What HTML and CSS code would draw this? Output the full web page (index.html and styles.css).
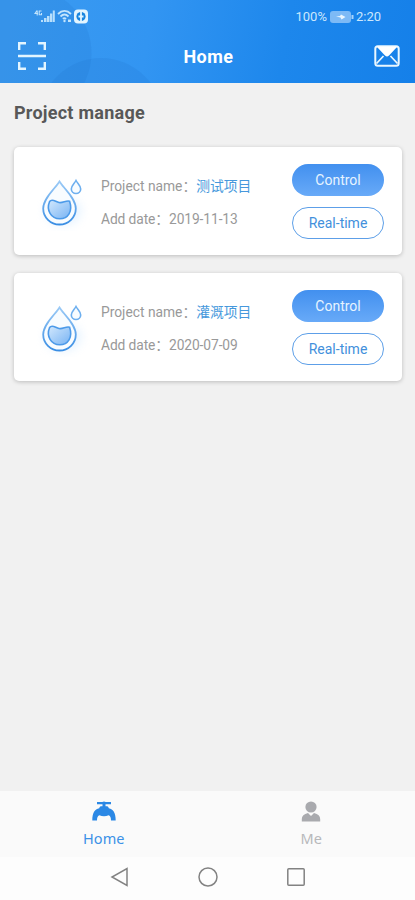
FILE: index.html
```html
<!DOCTYPE html>
<html lang="en">
<head>
<meta charset="utf-8">
<title>Home</title>
<link rel="stylesheet" href="styles.css">
</head>
<body>
<svg class="defs" width="0" height="0" aria-hidden="true">
  <defs>
    <linearGradient id="line" x1="0" y1="0" x2="0" y2="1"><stop offset="0" stop-color="#9bcaf6"/><stop offset="1" stop-color="#3a8ee4"/></linearGradient>
    <linearGradient id="water" x1="0" y1="0" x2="1" y2="1"><stop offset="0" stop-color="#d2e8fd"/><stop offset="1" stop-color="#78b3f3"/></linearGradient>
    <symbol id="drops" viewBox="0 0 56 60">
      <ellipse class="glow" cx="28" cy="40" rx="18" ry="14"/>
      <path d="M24.500 10.500C21 16.500 8.200 27 8.200 37.500A16.300 16 0 0 0 40.800 37.500C40.800 27 28 16.500 24.500 10.500Z" fill="#f8fcff" stroke="url(#line)" stroke-width="1.800"/>
      <path d="M14.600 30.500C17 27 20.500 30.800 24 31.500C28 32.300 31 29 34.600 30.200C38 40.500 33 47.700 24.800 47.700C16 47.700 11 39 14.600 30.500Z" fill="url(#water)" stroke="#4c9ae9" stroke-width="1.600"/>
      <path d="M41 9.500C39.500 12.500 36.300 14.500 36.300 18A4.700 4.500 0 0 0 45.700 18C45.700 14.500 42.500 12.500 41 9.500Z" fill="#f8fcff" stroke="#6dafef" stroke-width="1.600"/>
    </symbol>
  </defs>
</svg>
<div class="app">
  <header class="header">
    <svg class="header-art" width="415" height="83"><circle cx="26" cy="53" r="65.500"/><circle cx="101" cy="120" r="62"/></svg>
    <div class="status">
      <svg class="signals" width="56" height="16" viewBox="0 0 56 16">
        <path d="M3 2.500L1 5.500H4M3.200 2.500V7.500M7.500 3H5.200V6.800H7.500V5" fill="none" stroke="#c2e4fd" stroke-width="1.100"/>
        <path d="M7 12h2v2H7zM10 10h2.500v4H10zM13 8h2.500v6H13zM16 5.500h2.300V14H16zM18.800 2.500h2V14h-2z" fill="#b8dffc"/>
        <path d="M24 6C28 2 33 2 37 6M26.500 8.500C29 6 32 6 34.500 8.500M28.800 10.800Q30.500 9.500 32 11" fill="none" stroke="#c2e4fd" stroke-width="1.800"/>
        <circle cx="30.500" cy="13" r="1.200" fill="#c2e4fd"/><path d="M34 11.500h3V14h-3z" fill="#c2e4fd"/>
        <rect x="40" y="1.500" width="14" height="14" rx="4" fill="#e3f5ff"/>
        <circle cx="47" cy="8.500" r="4.600" fill="#1784df"/><path d="M47 4V13M44.500 8.500H49.500" stroke="#e3f5ff" stroke-width="1.800"/>
      </svg>
      <div class="status-right">
        <span class="pct">100%</span>
        <svg width="24" height="12" viewBox="0 0 24 12"><rect x="0" y="0" width="21" height="12" rx="3" fill="#7dbaf6"/><path d="M21.500 4h2v4h-2z" fill="#a8d4fa"/><path d="M6 5.500L10 5L11 3.500L15.500 6L11.500 8.500L10.500 6.500Z" fill="#e9f6ff"/></svg>
        <span class="clock">2:20</span>
      </div>
    </div>
    <div class="titlebar">
      <svg width="28" height="28" viewBox="0 0 28 28" fill="none" stroke="#e3f5ff" stroke-width="2.400"><path d="M1.200 8V1.200H8M20 1.200H26.800V8M1.200 20V26.800H8M20 26.800H26.800V20M0 14H28"/></svg>
      <h1>Home</h1>
      <svg width="26" height="22" viewBox="0 0 26 22"><rect x="1.300" y="1.300" width="23.400" height="19.400" rx="2.500" fill="none" stroke="#e9f7ff" stroke-width="2"/><path d="M2.500 1.500H23.500L15 10.500Q13 12.500 11 10.500Z" fill="#fff"/><path d="M2.500 18.500L9.500 11M23.500 18.500L16.500 11" fill="none" stroke="#e9f7ff" stroke-width="1.700"/></svg>
    </div>
  </header>
  <main>
    <h2>Project manage</h2>
    <section class="card">
      <svg class="drops" width="56" height="60"><use href="#drops"/></svg>
      <div class="info">
        <p><span class="name-label">Project name：</span><span class="name">测试项目</span></p>
        <p>Add date：2019-11-13</p>
      </div>
      <div class="actions"><button class="control">Control</button><button class="realtime">Real-time</button></div>
    </section>
    <section class="card">
      <svg class="drops" width="56" height="60"><use href="#drops"/></svg>
      <div class="info">
        <p><span class="name-label">Project name：</span><span class="name">灌溉项目</span></p>
        <p>Add date：2020-07-09</p>
      </div>
      <div class="actions"><button class="control">Control</button><button class="realtime">Real-time</button></div>
    </section>
  </main>
  <nav class="tabs">
    <div class="tab active">
      <svg width="24" height="20" viewBox="0 0 24 20" fill="#2b88e5"><path d="M5 1H10.300Q12 0 13.700 1H19V3.300H13.500V5.300H15.300Q16.500 6 16.800 7.300C21.300 8 23.700 12 23.700 19.500H19C19 16.800 18.500 15 16.700 14.200Q12 16.300 7.300 14.200C5.500 15 5 16.800 5 19.500H.3C.3 12 2.700 8 7.200 7.300Q7.500 6 8.700 5.300H10.500V3.300H5Z"/></svg>
      <span>Home</span>
    </div>
    <div class="tab">
      <svg width="20" height="21" viewBox="0 0 20 21" fill="#a9aaae"><circle cx="10" cy="6" r="5.600"/><path d="M.8 20.500V18Q.8 13.500 7 12L10 15L13 12Q19.200 13.500 19.200 18V20.500Z"/></svg>
      <span>Me</span>
    </div>
  </nav>
  <div class="system">
    <svg width="20" height="20" viewBox="0 0 20 20"><path d="M17 1.500V18.500L2 10Z"/></svg>
    <svg width="20" height="20" viewBox="0 0 20 20"><circle cx="10" cy="10" r="9"/></svg>
    <svg width="20" height="20" viewBox="0 0 20 20"><rect x="1.800" y="1.800" width="16.400" height="16.400" rx="1"/></svg>
  </div>
</div>
</body>
</html>
```
FILE: styles.css
```css
* { box-sizing: border-box; }
body { margin: 0; font-family: Roboto, "Noto Sans CJK SC", sans-serif; background: #f1f1f1; }
h1, h2, p { margin: 0; }
svg { display: block; flex: none; }
.defs { position: absolute; }
.app { display: flex; flex-direction: column; width: 415px; height: 900px; overflow: hidden; }

.header { position: relative; height: 83px; background: linear-gradient(100deg, #3c9bf0 0%, #3295f2 36%, #1d87ec 68%, #1580e9 100%); color: #fff; }
.header-art { position: absolute; inset: 0; fill: rgba(30, 115, 200, .17); }
.status, .titlebar { position: relative; display: flex; justify-content: space-between; }
.status { height: 32px; padding: 8px 34px 0; }
.status-right { display: flex; align-items: center; height: 17px; color: #cbe7fd; font-size: 13px; }
.status-right svg { margin: 0 2px 0 3px; }
.titlebar { height: 50px; align-items: center; padding: 0 15px 3px 18px; }
h1 { font-size: 18px; line-height: 24px; font-weight: 700; letter-spacing: .5px; padding: 2px 3px 0 0; }

main { flex: 1; padding: 18px 13px 0 14px; }
h2 { height: 46px; font-size: 18px; line-height: 24px; font-weight: 700; letter-spacing: .25px; color: #585858; }
.card { display: flex; height: 108px; margin-bottom: 18px; border-radius: 5px; background: #fff; box-shadow: 0 1px 4px rgba(0, 0, 0, .22); }
.drops { margin: 24px 0 0 21px; }
.glow { fill: #e6f3ff; filter: blur(5px); }
.info { flex: 1; padding: 29px 0 0 10px; color: #999; font-size: 13.8px; line-height: 20px; white-space: nowrap; }
.info p { height: 33px; }
.info p + p { letter-spacing: -.1px; }
.name { color: #4698dc; }
.actions { display: flex; flex-direction: column; gap: 11px; padding: 17px 18px 0 0; }
button { width: 92px; height: 32px; padding: 0; border: 1px solid #5d9fe8; border-radius: 16px; font: 14px/31px Roboto, sans-serif; }
.control { border: 0; line-height: 33px; background: linear-gradient(#4290ef, #68aaf8); color: #e7f4ff; }
.realtime { background: #fff; color: #4290dc; }

.tabs { display: flex; height: 66px; background: #fafafa; }
.tab { flex: 1; display: flex; flex-direction: column; align-items: center; padding-top: 10px; color: #b7b8bb; font: 14.5px/20px "Noto Sans", sans-serif; }
.tab span { margin-top: 6px; }
.active { color: #3b91e7; }
.active span { margin-top: 7px; }
.system { display: flex; justify-content: center; gap: 68px; height: 43px; padding-top: 10px; background: #fdfdfd; fill: none; stroke: #828282; stroke-width: 1.5; }
```
